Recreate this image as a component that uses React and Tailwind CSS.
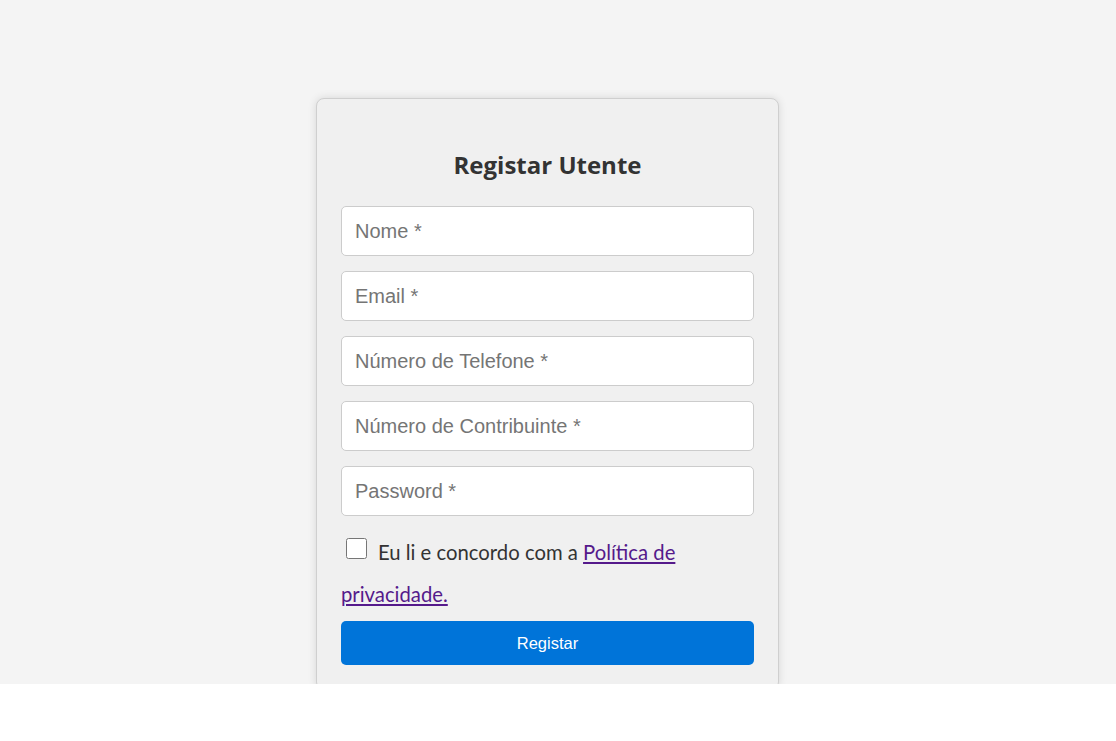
export default function App() {
  return (
    <div className="min-h-screen bg-white">
      {/* área principal */}
      <div className="h-[684px] overflow-hidden bg-[#f4f4f4] pt-[98px] pr-[21px]">
        <div className="mx-auto w-[463px] rounded-lg border border-[#cfcfcf] bg-[#f0f0f0] px-6 pt-[51px] pb-6 shadow-[0_0_8px_rgba(0,0,0,0.12)]">
          <h2 className="mb-[26px] text-center font-['Open_Sans',sans-serif] text-[24px] font-bold leading-[30px] text-[#333]">
            Registar Utente
          </h2>

          <form className="flex flex-col gap-[15px]">
            {['Nome *', 'Email *', 'Número de Telefone *', 'Número de Contribuinte *', 'Password *'].map((p) => (
              <input
                key={p}
                type="text"
                placeholder={p}
                className="h-[50px] w-full rounded-[5px] border border-[#cccccc] bg-white px-[13px] font-['Liberation_Sans',Arial,sans-serif] text-[20px] text-[#333] placeholder:text-[#757575] outline-none"
              />
            ))}

            <p className="-mb-[9px] font-['Lato',sans-serif] text-[20.3px] leading-[42px] text-[#333]">
              <input type="checkbox" className="relative -top-[1px] ml-[5px] mr-[11px] h-[21px] w-[21px] align-baseline" />
              Eu li e concordo com a{' '}
              <a href="#" className="text-[#551a8b] underline">
                Política de privacidade.
              </a>
            </p>

            <button
              type="button"
              className="h-[44px] w-full rounded-[5px] bg-[#0074d9] font-['Liberation_Sans',Arial,sans-serif] text-[16.5px] text-white"
            >
              Registar
            </button>
          </form>
        </div>
      </div>
    </div>
  );
}
